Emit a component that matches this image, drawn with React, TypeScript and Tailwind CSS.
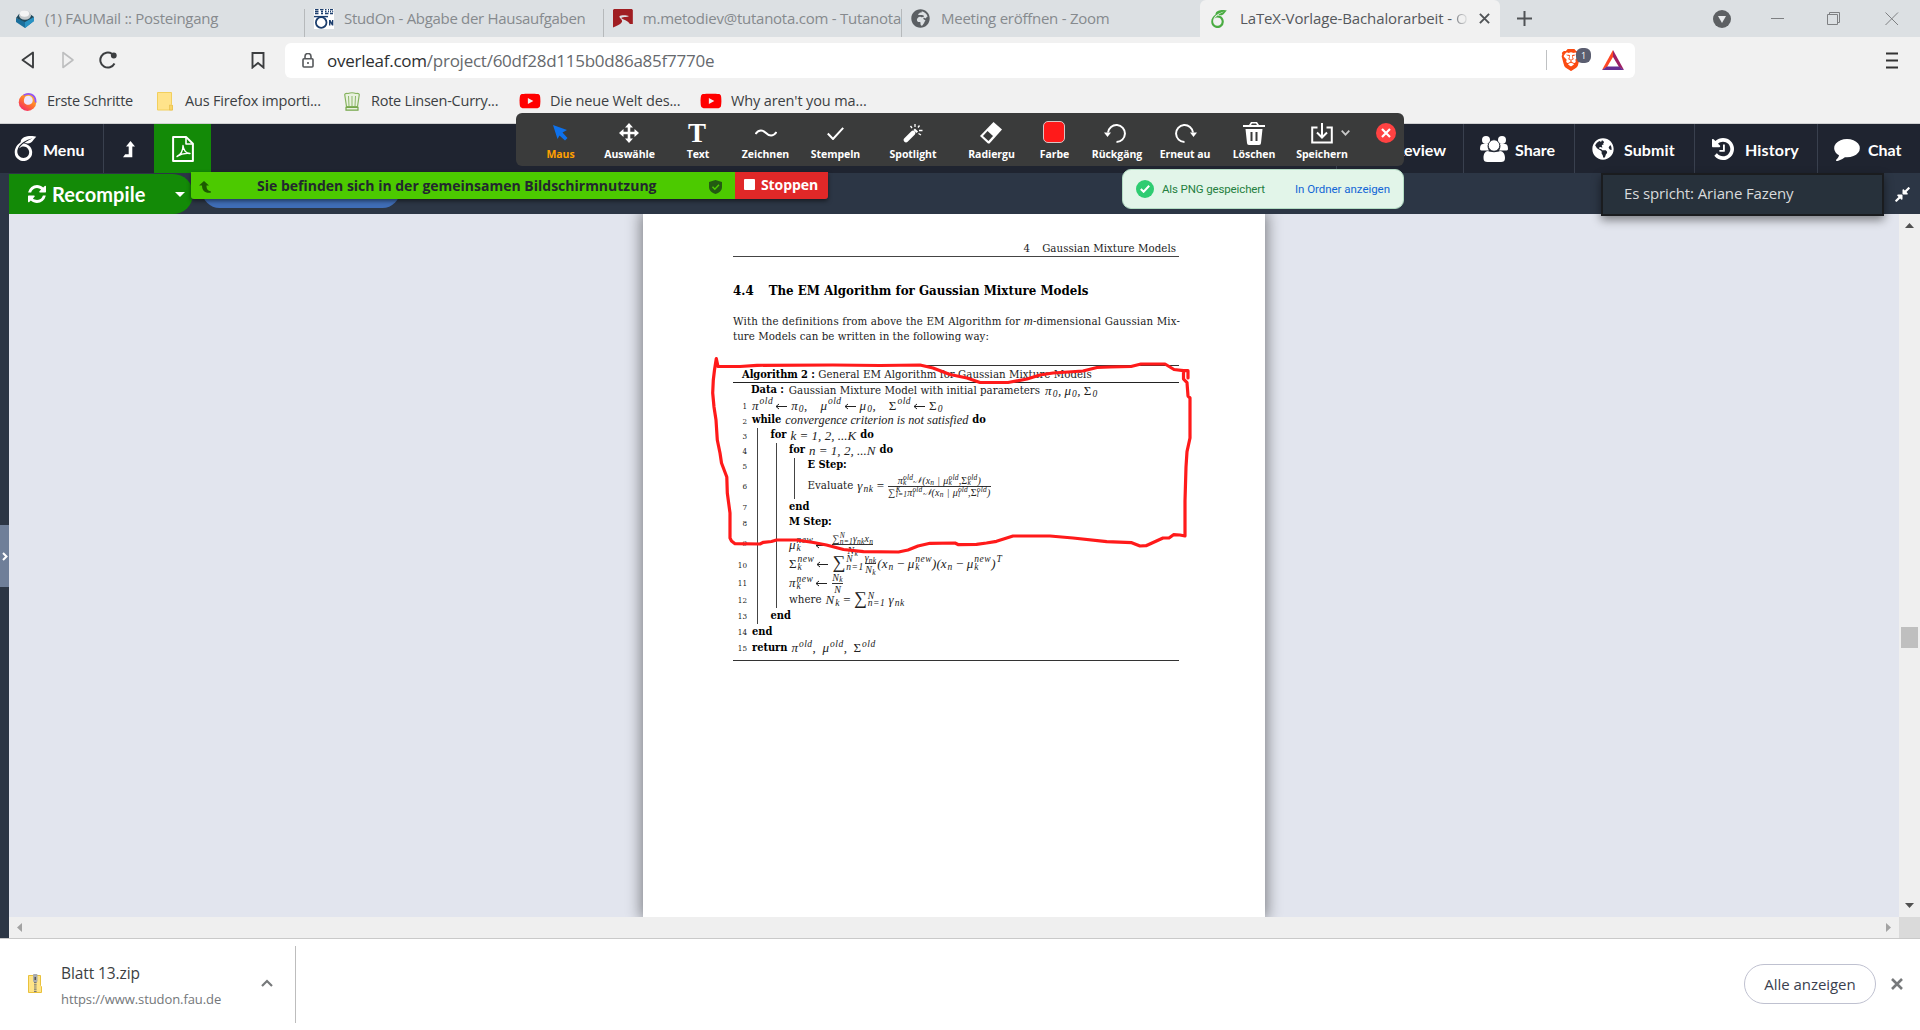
import React from "react";
import type { ReactNode } from "react";
import { SiOverleaf, SiBrave } from "react-icons/si";
import { FaYoutube, FaCompressAlt, FaGlobeAmericas, FaGlobeAfrica } from "react-icons/fa";

/* ---------- icons ---------- */

const Glyph = ({ d, className, box = "0 0 1792 1792" }: { d: string; className: string; box?: string }) => (
  <svg viewBox={box} className={className} fill="currentColor">
    <path d={d} />
  </svg>
);

const REFRESH =
  "M1511 1056q0 5-1 7-64 268-268 434.5t-478 166.5q-146 0-282.5-55t-243.5-157l-129 129q-19 19-45 19t-45-19-19-45v-448q0-26 19-45t45-19h448q26 0 45 19t19 45-19 45l-137 137q71 66 161 102t187 36q134 0 250-65t186-179q11-17 53-117 8-23 30-23h192q13 0 22.5 9.5t9.5 22.5zm25-800v448q0 26-19 45t-45 19h-448q-26 0-45-19t-19-45 19-45l138-138q-148-137-349-137-134 0-250 65t-186 179q-11 17-53 117-8 23-30 23h-199q-13 0-22.5-9.5t-9.5-22.5v-7q65-268 270-434.5t480-166.5q146 0 284 55.5t245 156.5l130-129q19-19 45-19t45 19 19 45z";
const HISTORY =
  "M1664 896q0 156-61 298t-164 245-245 164-298 61q-172 0-327-72.5t-264-204.5q-7-10-6.5-22.5t8.5-20.5l137-138q10-9 25-9 16 2 23 12 73 95 179 147t225 52q104 0 198.5-40.5t163.5-109.5 109.5-163.5 40.5-198.5-40.5-198.5-109.5-163.5-163.5-109.5-198.5-40.5q-98 0-188 35.5t-160 101.5l137 138q31 30 14 69-17 40-59 40h-448q-26 0-45-19t-19-45v-448q0-42 40-59 39-17 69 14l130 129q107-101 244.5-156.5t284.5-55.5q156 0 298 61t245 164 164 245 61 298zm-640-288v448q0 14-9 23t-23 9h-320q-14 0-23-9t-9-23v-64q0-14 9-23t23-9h224v-352q0-14 9-23t23-9h64q14 0 23 9t9 23z";
const COMMENT =
  "M1792 896q0 174-120 321.5t-326 233-450 85.5q-70 0-145-8-198 175-460 242-49 14-114 22-17 2-30.5-9t-17.5-29v-1q-3-4-.5-12t2-10 4.5-9.5l6-9 7-8.5 8-9q7-8 31-34.5t34.5-38 31-39.5 32.5-51 27-59 26-76q-157-89-247.5-220t-90.5-281q0-174 120-321.5t326-233 450-85.5 450 85.5 326 233 120 321.5z";

const MailIcon = () => (
  <svg viewBox="0 0 20 20" className="size-5">
    <path d="M1 9l9 3 9-4v4l-9 7-9-6z" fill="#1b6f9c" />
    <path d="M10 12l9-4v4l-9 7z" fill="#2a93c4" />
    <path d="M1 9l3-4h11l4 3-9 5z" fill="#20495c" />
    <ellipse cx="10" cy="6.200" rx="6" ry="4.600" fill="#c6cacc" />
    <ellipse cx="9.500" cy="4.600" rx="4.600" ry="3.200" fill="#f4f5f5" />
  </svg>
);

const StudonIcon = () => (
  <svg viewBox="0 0 20 20" className="size-5">
    <rect width="20" height="20" fill="#fff" />
    <path d="M1 .5h3.500M1 2.500h3.500M1 4.500h3.500M6 .5h3.500M7 2.500h2M7 4.500h2M11 .5h1.500M11 2.500h1.500M11 4.500h3.500M14 .5h1M14 2.500h1M16 .5h3M16 2.500h1M18.200 2.500h1M16 4.500h3" stroke="#1d3f6e" strokeWidth="1.500" />
    <circle cx="7.200" cy="13.500" r="5.300" fill="none" stroke="#1d3f6e" strokeWidth="1.800" />
    <path d="M0 7.600h14" stroke="#1d3f6e" strokeWidth="1.400" />
    <path d="M15 11h1.500l1.500 2.500V11h1.300v5.500H18L16.400 14v2.500H15z" fill="#1d3f6e" />
  </svg>
);

const TutanotaIcon = () => (
  <svg viewBox="0 0 20 19" className="h-[19px] w-5">
    <path d="M1 0h18l1 1v14h-3C15 11.500 10 10.500 8.500 9.200c-.5-1.200 6.500-1 7.500-2.200-3-1.200-8.500-1-9.500.3C6 9 10 10.500 9 13c-1.500 2.500-5 4-9 5.500V1z" fill="#a01e22" />
  </svg>
);

const FirefoxIcon = () => (
  <svg viewBox="0 0 20 20" className="size-[19px]">
    <defs>
      <linearGradient id="fx" x1="0.9" y1="0" x2="0.2" y2="1">
        <stop offset="0" stopColor="#ffcf2e" />
        <stop offset="0.5" stopColor="#ff7a2a" />
        <stop offset="1" stopColor="#f5246b" />
      </linearGradient>
    </defs>
    <circle cx="10" cy="10.700" r="9.200" fill="url(#fx)" />
    <path d="M6 3.500c5-3.500 13-1 12.500 7.500" fill="none" stroke="#9355f5" strokeWidth="1.800" />
    <path d="M7.500 5c4-2.500 8.500 0 8 4.500-.5 4-5 5-7.500 3C5.500 11.500 6 7.500 7.500 5z" fill="#eee6fb" />
  </svg>
);

const FolderIcon = () => (
  <svg viewBox="0 0 16 19" className="h-[19px] w-4">
    <path d="M.5.500h14v12l1.200 1V18H.5z" fill="#ffe38b" stroke="#f2cf5d" />
    <path d="M12.500 18v-5l3 .5V18z" fill="#f8d567" stroke="#e5bb46" strokeWidth=".6" />
  </svg>
);

const ChefIcon = () => (
  <svg viewBox="0 0 16 19" className="h-[19px] w-4">
    <path d="M2.500 14.500L.7 2.500Q1 1 4 1.500q4-1.500 8 0 3-.5 3.300 1L13.500 14.500z" fill="#e9f2df" stroke="#86b35e" strokeWidth="1.200" />
    <path d="M4.500 4l.5 10M8 4v10M11.500 4L11 14" stroke="#8db76a" />
    <path d="M2 15.300h12v2.900H2z" fill="#e9f2df" stroke="#76a64b" strokeWidth="1.200" />
  </svg>
);

const BatIcon = () => (
  <svg viewBox="0 0 22 20" className="h-5 w-[22px]">
    <path d="M11 0L0 20l5-3 6-10z" fill="#ff4724" />
    <path d="M11 0l11 20-5-3-6-10z" fill="#9e1f63" />
    <path d="M0 20l5-3.500h12L22 20z" fill="#662d91" />
  </svg>
);

const UsersIcon = () => (
  <svg viewBox="0 0 28 26" className="h-[26px] w-7" fill="currentColor">
    <circle cx="6" cy="4" r="4" />
    <circle cx="22" cy="4" r="4" />
    <path d="M0 13c0-3.500 1-5 3-5h5c-1 3 0 5 1 6.500H2.500C1 14.500 0 14 0 13zM28 13c0-3.500-1-5-3-5h-5c1 3 0 5-1 6.500h6.500c1.500 0 2.500-.5 2.500-1.500z" />
    <circle cx="14" cy="9.500" r="5.700" stroke="#1f2430" strokeWidth=".8" />
    <path d="M8 15c2 1.500 10 1.500 12 0 3 0 5 3 5 7 0 3-1.500 4-4 4H7.500C5 26 3.500 25 3.500 22c0-4 1.500-7 4.500-7z" />
  </svg>
);

const PdfIcon = () => (
  <svg viewBox="0 0 22 26" className="h-[26px] w-[22px]" fill="none" stroke="#fff" strokeLinejoin="round">
    <path d="M1.100 1.100h13.200l6.600 6.600v17.200H1.100z" strokeWidth="2" />
    <path d="M14 1v7h7" strokeWidth="1.600" />
    <path d="M5 20.500c4-2 6-6 6-11 .5 5 3 7.500 7 8-4-.5-8.500 0-13 3z" strokeWidth="1.400" />
  </svg>
);

const ZipIcon = () => (
  <svg viewBox="0 0 14 19" className="h-[19px] w-3.5">
    <path d="M.5 1.500h12v10l1 1.200v5.800H.5z" fill="#ffe488" stroke="#e9c13c" />
    <rect x="5" y="0" width="4.500" height="8" rx="1" fill="#a9abad" />
    <rect x="6.500" y="3" width="1.500" height="3" fill="#555" />
    <path d="M7.300 8v10.500" stroke="#777" strokeWidth="2.600" strokeDasharray="1.200 1" />
  </svg>
);

/* ---------- browser chrome ---------- */

const Tab = ({ icon, title, className }: { icon: ReactNode; title: string; className: string }) => (
  <div className={`flex h-[37px] shrink-0 items-center overflow-hidden whitespace-nowrap ${className}`}>
    {icon}
    <span>{title}</span>
  </div>
);

const TabSplit = () => <div className="mt-[9px] h-7 w-px shrink-0 bg-[#b6b9bb]" />;

const TabBar = () => (
  <div className="flex h-[37px] shrink-0 bg-[#dce0e3] text-[15px] tracking-[-0.31px] text-[#868a8e]">
    <Tab className="w-[304px] gap-2.5 pl-[15px] tracking-[-0.28px]" icon={<MailIcon />} title="(1) FAUMail :: Posteingang" />
    <TabSplit />
    <Tab className="w-[298px] gap-[10px] pl-[9px]" icon={<StudonIcon />} title="StudOn - Abgabe der Hausaufgaben" />
    <TabSplit />
    <Tab className="w-[297px] gap-[10px] pl-[9px] tracking-[-0.25px]" icon={<TutanotaIcon />} title="m.metodiev@tutanota.com - Tutanota" />
    <TabSplit />
    <Tab
      className="w-[298px] gap-[11px] pl-[9px] tracking-[-0.26px]"
      icon={<FaGlobeAfrica className="size-[19px] text-[#5b5f63]" />}
      title="Meeting eröffnen - Zoom"
    />
    <div className="flex h-[37px] w-[300px] shrink-0 items-center rounded-t-md bg-[#f1f1f1] text-[#55585c]">
      <SiOverleaf className="ml-2.5 size-[18px] text-[#4aac42]" />
      <span className="ml-3 tracking-[-0.12px]">LaTeX-Vorlage-Bachalorarbeit - </span>
      <span className="ml-1 w-[13px] overflow-hidden bg-gradient-to-r from-[#85888c] to-[#f1f1f1] bg-clip-text text-transparent">O</span>
      <svg viewBox="0 0 12 12" className="ml-[10px] size-[11px]" stroke="#505356" strokeWidth="2.100">
        <path d="M1 1l10 10M11 1L1 11" />
      </svg>
    </div>
    <svg viewBox="0 0 15 15" className="mt-[11px] ml-[17px] size-[15px]" stroke="#505356" strokeWidth="2">
      <path d="M7.500 0v15M0 7.500h15" />
    </svg>
    <div className="mt-2.5 ml-[181px] flex size-[18px] items-center justify-center rounded-full bg-[#5d6063]">
      <svg viewBox="0 0 8 7" className="w-2" fill="#e8eaec">
        <path d="M0 0h8L4 7z" />
      </svg>
    </div>
    <svg viewBox="0 0 128 14" className="mt-3 ml-10 h-3.5 w-32" fill="none" stroke="#7e8082">
      <path d="M0 6.500h13M56.500 2.500h10v10h-10zM58.500 2V.500h10v10H67M114.500.500l12.500 12.500M127 .500L114.500 13" />
    </svg>
  </div>
);

const AddressRow = () => (
  <div className="flex h-[46px] shrink-0 items-center">
    <svg viewBox="0 0 96 18" className="ml-[21px] h-[18px] w-24" fill="none" strokeLinejoin="round">
      <path d="M12 1.500v15L1.500 9z" stroke="#3c3e40" strokeWidth="1.900" />
      <path d="M42 1.500v15L52 9z" stroke="#bdbebf" strokeWidth="1.600" />
      <path d="M93.500 12.500A7.500 7.500 0 1 1 91 2.800" stroke="#3c3e40" strokeWidth="2" />
      <circle cx="92.800" cy="4.500" r="2.900" fill="#3c3e40" />
    </svg>
    <svg viewBox="0 0 14 17" className="ml-[134px] h-[17px] w-3.5" fill="none" stroke="#3c3e40" strokeWidth="1.900">
      <path d="M1.500 1h11v14.500L7 11l-5.500 4.500z" />
    </svg>
    <div className="ml-5 flex h-[35px] w-[1350px] items-center rounded-md bg-white">
      <svg viewBox="0 0 12 15" className="ml-[17px] h-[15px] w-3" fill="none" stroke="#55585b" strokeWidth="1.600">
        <rect x="1" y="5.800" width="10" height="8.200" rx="1" />
        <path d="M3 5.500V3.500a3 3 0 0 1 6 0v2M6 9v2" />
      </svg>
      <span className="ml-[13px] pt-0.5 text-[17px] tracking-[-0.25px] text-[#66696d]">
        <span className="text-[#2d2f31]">overleaf.com</span>/project/60df28d115b0d86a85f7770e
      </span>
      <div className="mr-[14px] ml-auto h-5 w-px bg-[#bfc1c3]" />
      <div className="relative flex h-6 w-[41px] items-center">
        <SiBrave className="-ml-px size-[22px] text-[#fb4b12]" />
        <span className="absolute top-0 left-[15px] flex size-[15px] items-center justify-center rounded-md bg-[#5b5e70] text-[9px] text-white">1</span>
      </div>
      <div className="mr-[11px]">
        <BatIcon />
      </div>
    </div>
    <svg viewBox="0 0 12 17" className="mr-[22px] ml-auto h-[17px] w-3" stroke="#333" strokeWidth="1.800">
      <path d="M0 1.500h12M0 8.500h12M0 15.500h12" />
    </svg>
  </div>
);

const Bookmark = ({ icon, title, className }: { icon: ReactNode; title: string; className: string }) => (
  <div className={`flex shrink-0 items-center whitespace-nowrap ${className}`}>
    {icon}
    <span>{title}</span>
  </div>
);

const YouTube = () => <FaYoutube className="-mx-px size-[22px] text-[#ff0000]" />;

const Bookmarks = () => (
  <div className="flex h-[41px] shrink-0 items-center border-b border-[#cfd0d1] pb-1 text-[14.5px] tracking-[-0.24px] text-[#3c3f43]">
    <Bookmark className="w-[157px] gap-2.5 pl-[18px] tracking-[-0.28px]" icon={<FirefoxIcon />} title="Erste Schritte" />
    <Bookmark className="w-[187px] gap-3 tracking-[-0.18px]" icon={<FolderIcon />} title="Aus Firefox importi..." />
    <Bookmark className="w-[176px] gap-[11px]" icon={<ChefIcon />} title="Rote Linsen-Curry..." />
    <Bookmark className="w-[181px] gap-2.5 tracking-[-0.15px]" icon={<YouTube />} title="Die neue Welt des..." />
    <Bookmark className="gap-2.5 tracking-[-0.12px]" icon={<YouTube />} title="Why aren't you ma..." />
  </div>
);

/* ---------- editor header ---------- */

const HeaderButton = ({ icon, label, className }: { icon?: ReactNode; label: string; className: string }) => (
  <div className={`flex h-full shrink-0 items-center border-l border-[#39404e] ${className}`}>
    {icon}
    <span className="pt-[3px]">{label}</span>
  </div>
);

const EditorHeader = () => (
  <div className="flex h-[49px] shrink-0 items-center bg-[#1f2430] font-['Lato'] text-[16px] font-bold text-white">
    <div className="flex h-full w-[103px] items-center pl-[13px]">
      <SiOverleaf className="size-[25px]" />
      <span className="pt-[3px] pl-[5px]">Menu</span>
    </div>
    <div className="flex h-full w-[51px] items-center justify-center border-l border-[#39404e] pt-px">
      <svg viewBox="0 0 12 17" className="h-[17px] w-3" fill="currentColor">
        <path d="M7.500 0L12 5.500H9.300V16.200H0L2.200 13.300H5.700V5.500H3z" />
      </svg>
    </div>
    <div className="flex h-full w-[57px] items-center justify-center bg-[#138a07]">
      <PdfIcon />
    </div>
    <div className="ml-auto flex h-full">
      <HeaderButton className="w-[127px] justify-end pr-[17px] pl-4" label="Review" />
      <HeaderButton className="w-[111px] gap-[7px] pl-4" icon={<UsersIcon />} label="Share" />
      <HeaderButton className="w-[120px] gap-2.5 pl-[17px] tracking-[0.1px]" icon={<FaGlobeAmericas className="size-[22px]" />} label="Submit" />
      <HeaderButton
        className="w-[123px] gap-[11px] pl-[17px] tracking-[0.15px]"
        icon={<Glyph d={HISTORY} box="128 128 1536 1536" className="size-[22px]" />}
        label="History"
      />
      <HeaderButton
        className="w-[103px] gap-2 pl-4"
        icon={<Glyph d={COMMENT} box="0 256 1792 1536" className="mt-0.5 h-[22px] w-[26px]" />}
        label="Chat"
      />
    </div>
  </div>
);

const PdfToolbar = () => (
  <div className="flex h-[41px] shrink-0 items-start bg-[#2c3645] pl-[9px]">
    <div className="mt-px flex h-10 w-[184px] items-center rounded-r-[20px] bg-[#138a07] font-['Lato'] text-white">
      <Glyph d={REFRESH} box="0 128 1536 1536" className="ml-[19px] size-[18px]" />
      <span className="pl-1.5 text-[20px] font-bold tracking-[0.1px]">Recompile</span>
      <svg viewBox="0 0 10 5" className="ml-[29px] h-[5px] w-2.5" fill="currentColor">
        <path d="M0 0h10L5 5z" />
      </svg>
    </div>
    <div className="ml-[9px] h-[35px] w-[198px] rounded-full bg-[#3f6db6]" />
    <FaCompressAlt className="mt-[13px] mr-[9px] ml-auto size-[17px] text-white" />
  </div>
);

/* ---------- document ---------- */

/* Variable with stacked superscript and subscript. */
const V = ({ children, sup, sub, small }: { children?: ReactNode; sup?: ReactNode; sub?: ReactNode; small?: boolean }) => (
  <span className="inline-flex items-center">
    <span>{children}</span>
    <span
      className={
        small
          ? "inline-flex flex-col text-[7.5px] leading-[5.500px] tracking-[0.2px]"
          : "inline-flex flex-col pl-px text-[9.5px] leading-[7.500px] tracking-[0.5px]"
      }
    >
      <span>{sup ?? "\u00a0"}</span>
      <span>{sub ?? "\u00a0"}</span>
    </span>
  </span>
);

const M = ({ children }: { children: ReactNode }) => (
  <span className="inline-flex items-center font-['Liberation_Serif','DejaVu_Serif',serif] text-[13px] whitespace-pre italic">{children}</span>
);

const Frac = ({ top, bottom }: { top: ReactNode; bottom: ReactNode }) => (
  <span className="mx-px inline-flex flex-col items-center text-[10px] leading-[11px] tracking-[0.2px] whitespace-pre">
    <span className="flex h-[11px] items-center">{top}</span>
    <span className="h-px w-full bg-[#333]" />
    <span className="flex h-[11px] items-center">{bottom}</span>
  </span>
);

const R = ({ children }: { children: ReactNode }) => <span className="not-italic">{children}</span>;
const B = ({ children }: { children: ReactNode }) => <b className="text-[11px] tracking-[-0.05px] text-black">{children}</b>;
const Arrow = () => (
  <svg viewBox="0 0 12 8" className="mr-[4px] ml-[2px] h-2 w-3" fill="none" stroke="#222">
    <path d="M1 4.500h11M4 2L1 4.500 4 7" />
  </svg>
);
const BigSum = () => <span className="text-[18px] leading-[14px] not-italic">∑</span>;

const Row = ({ n, depth, className, children }: { n: number; depth: number; className: string; children: ReactNode }) => (
  <div className={`flex ${className}`}>
    <span className="flex w-[14px] items-center justify-end pt-0.5 text-[8px]">{n}</span>
    <span className="w-[5px]" />
    {Array.from({ length: depth }, (_, i) => (
      <span key={i} className="ml-[5px] w-[13.500px] border-l border-[#444]" />
    ))}
    <span className="flex items-center gap-1 whitespace-pre">{children}</span>
  </div>
);

const Gauss = ({ i }: { i: string }) => (
  <>
    <V small sup="old" sub={i}>π</V>
    <span className="text-[9px] tracking-normal">𝒩</span>(<V small sub="n">x</V>
    <span className="px-[3px]">|</span>
    <V small sup="old" sub={i}>μ</V>,<V small sup="old" sub={i}><R>Σ</R></V>)
  </>
);

const Algorithm = () => (
  <div className="mt-[21px] h-[296px] w-[446px] border-y border-[#333] text-[11.4px] tracking-[0.03px] text-[#222]">
    <div className="h-[17px] border-b border-[#222] pl-[9px] leading-[16px] whitespace-pre">
      <B>Algorithm 2 :</B> General EM Algorithm for Gaussian Mixture Models
    </div>
    <div className="flex h-[15px] items-center pl-[18px] whitespace-pre">
      <B>Data :</B>
      <span className="pr-[5px] pl-[5px]">Gaussian Mixture Model with initial parameters</span>
      <M>
        <V sub="0">π</V>,<V sub="0"> μ</V>,<V sub="0"><R> Σ</R></V>
      </M>
    </div>
    <Row n={1} depth={0} className="h-[15px]">
      <M>
        <V sup="old">π</V><Arrow /><V sub="0">π</V><R>,    </R>
        <V sup="old">μ</V><Arrow /><V sub="0">μ</V><R>,    </R>
        <V sup="old"><R>Σ</R></V><Arrow /><V sub="0"><R>Σ</R></V>
      </M>
    </Row>
    <Row n={2} depth={0} className="h-[15px]">
      <B>while</B>
      <M><span className="text-[12.300px]">convergence criterion is not satisfied</span></M>
      <B>do</B>
    </Row>
    <Row n={3} depth={1} className="h-[15px]">
      <B>for</B><M>k = 1, 2, ...K</M><B>do</B>
    </Row>
    <Row n={4} depth={2} className="h-[15px]">
      <B>for</B><M>n = 1, 2, ...N</M><B>do</B>
    </Row>
    <Row n={5} depth={3} className="h-[15px]">
      <B>E Step:</B>
    </Row>
    <Row n={6} depth={3} className="h-[26px]">
      <span>Evaluate</span>
      <M>
        <V sub="nk">γ</V>
        <R> = </R>
        <Frac top={<Gauss i="k" />} bottom={<><V small sup="K" sub="l=1"><R>∑</R></V><Gauss i="l" /></>} />
      </M>
    </Row>
    <Row n={7} depth={2} className="h-[16px]"><B>end</B></Row>
    <Row n={8} depth={2} className="h-[15px]"><B>M Step:</B></Row>
    <Row n={9} depth={2} className="h-[26px]">
      <div className="pt-[3px]">
        <M>
          <V sup="new" sub="k">μ</V><Arrow />
          <Frac
            top={<><V small sup="N" sub="n=1"><R>∑</R></V><V small sub="nk">γ</V><V small sub="n">x</V></>}
            bottom={<V small sub="k">N</V>}
          />
        </M>
      </div>
    </Row>
    <Row n={10} depth={2} className="h-[18px]">
      <div className="pb-[3px]">
        <M>
          <V sup="new" sub="k"><R>Σ</R></V><Arrow /><V sup="N" sub="n=1"><BigSum /></V>
          <Frac top={<V small sub="nk">γ</V>} bottom={<V small sub="k">N</V>} />
          (<V sub="n">x</V><R> − </R><V sup="new" sub="k">μ</V>)(<V sub="n">x</V><R> − </R><V sup="new" sub="k">μ</V>)<V sup="T" />
        </M>
      </div>
    </Row>
    <Row n={11} depth={2} className="h-[18px]">
      <M>
        <V sup="new" sub="k">π</V><Arrow /><Frac top={<V small sub="k">N</V>} bottom="N" />
      </M>
    </Row>
    <Row n={12} depth={2} className="h-[16px]">
      <span>where</span>
      <M>
        <V sub="k">N</V><R> = </R><V sup="N" sub="n=1"><BigSum /></V><V sub="nk"> γ</V>
      </M>
    </Row>
    <Row n={13} depth={1} className="h-[16px]"><B>end</B></Row>
    <Row n={14} depth={0} className="h-[16px]"><B>end</B></Row>
    <Row n={15} depth={0} className="h-[16px]">
      <B>return</B>
      <M>
        <V sup="old">π</V><R>,  </R><V sup="old">μ</V><R>,  </R><V sup="old"><R>Σ</R></V>
      </M>
    </Row>
  </div>
);

const Page = () => (
  <div className="h-full w-[622px] bg-white px-[90px] font-['DejaVu_Serif_Condensed','DejaVu_Serif',serif] text-[11.4px] text-[#222] shadow-[0_0_14px_2px_rgba(0,0,0,0.45)]">
    <div className="flex h-[43px] w-[446px] items-end justify-end gap-3 border-b border-[#444] pr-[3px] leading-[15px] tracking-[0.04px]">
      <span>4</span>
      <span>Gaussian Mixture Models</span>
    </div>
    <div className="mt-[25px] flex gap-[15px] text-[13.2px] leading-[18px] font-bold text-black">
      <span>4.4</span>
      <span>The EM Algorithm for Gaussian Mixture Models</span>
    </div>
    <p className="mt-[14px] leading-[15px] tracking-[0.16px] whitespace-pre">
      With the definitions from above the EM Algorithm for <i className="font-['Liberation_Serif'] text-[12.5px] leading-[12px]">m</i>-dimensional Gaussian Mix-
      <br />
      <span className="tracking-[0.06px]">ture Models can be written in the following way:</span>
    </p>
    <Algorithm />
  </div>
);

const Viewer = () => (
  <div className="flex h-[724px] shrink-0">
    <div className="flex w-[9px] shrink-0 flex-col bg-[#2c3645]">
      <div className="mt-[311px] flex h-[62px] items-center justify-center bg-[#6f7f99]">
        <svg viewBox="0 0 6 9" className="h-[9px] w-1.5" fill="none" stroke="#fff" strokeWidth="2">
          <path d="M1 1l3.500 3.500L1 8" />
        </svg>
      </div>
    </div>
    <div className="flex flex-1 flex-col">
      <div className="flex h-[703px]">
        <div className="flex flex-1 justify-start overflow-hidden bg-[#e2e5ee] pl-[634px]">
          <Page />
        </div>
        <div className="flex w-[21px] flex-col items-center bg-[#efefef]">
          <svg viewBox="0 0 9 5" className="mt-[9px] h-[5px] w-[9px]" fill="#505050">
            <path d="M0 5h9L4.500 0z" />
          </svg>
          <div className="mt-[399px] h-[21px] w-[17px] bg-[#bfbfbf]" />
          <svg viewBox="0 0 9 5" className="mt-auto mb-[9px] h-[5px] w-[9px]" fill="#505050">
            <path d="M0 0h9L4.500 5z" />
          </svg>
        </div>
      </div>
      <div className="flex h-[21px] items-center bg-[#efefef] pl-2">
        <svg viewBox="0 0 5 9" className="h-[9px] w-[5px]" fill="#a3a3a3">
          <path d="M5 0v9L0 4.500z" />
        </svg>
        <svg viewBox="0 0 5 9" className="mr-2 ml-auto h-[9px] w-[5px]" fill="#a3a3a3">
          <path d="M0 0v9l5-4.500z" />
        </svg>
        <div className="h-full w-[21px] bg-[#dadada]" />
      </div>
    </div>
  </div>
);

const Downloads = () => (
  <div className="flex flex-1 border-t border-[#c9c9c9] bg-white">
    <div className="mt-[7px] flex h-[77px] w-[296px] border-r border-[#bdbdbd] pl-7">
      <div className="mt-7">
        <ZipIcon />
      </div>
      <div className="ml-[19px] pt-[15px]">
        <div className="h-6 text-[15.500px] leading-6 tracking-[-0.1px] text-[#3c3f43]">Blatt 13.zip</div>
        <div className="mt-1 text-[13px] leading-5 tracking-[-0.08px] text-[#74777a]">https://www.studon.fau.de</div>
      </div>
      <svg viewBox="0 0 12 8" className="mt-[33px] mr-[22px] ml-auto h-2 w-3" fill="none" stroke="#77797b" strokeWidth="2.200">
        <path d="M1 7l5-5 5 5" />
      </svg>
    </div>
    <div className="mt-[25px] mr-[15px] ml-auto flex h-10 w-[132px] items-center justify-center rounded-full border border-[#bfc1d0] text-[15px] tracking-[-0.05px] text-[#3b3f4f]">
      Alle anzeigen
    </div>
    <svg viewBox="0 0 12 12" className="mt-[39px] mr-[17px] size-3" stroke="#77797b" strokeWidth="2.600">
      <path d="M1 1l10 10M11 1L1 11" />
    </svg>
  </div>
);

/* ---------- screen-sharing overlays ---------- */

const Tool = ({ label, className, children }: { label: string; className: string; children: ReactNode }) => (
  <div className={`flex shrink-0 flex-col items-center ${className}`}>
    <div className="flex h-[22px] items-center justify-center">{children}</div>
    <span className="mt-0.5 leading-4 whitespace-nowrap">{label}</span>
  </div>
);

const line = { fill: "none", stroke: "currentColor", strokeWidth: 2 } as const;

const ShareToolbar = () => (
  <div className="absolute top-[113px] left-[516px] flex h-[53px] w-[888px] rounded-md bg-[#3a3b3b] pt-[9px] pl-2.5 text-[10.500px] font-bold tracking-[-0.05px] text-white">
    <Tool label="Maus" className="w-[69px] text-[#ffa000]">
      <svg viewBox="0 0 15 16" className="h-4 w-[15px]" fill="#0e71eb">
        <path d="M0 0l14 5-4.500 2.500 5 5.500-2.500 2.500-5.500-5L4.500 14z" />
      </svg>
    </Tool>
    <Tool label="Auswähle" className="w-[69px]">
      <svg viewBox="0 0 20 20" className="-ml-px size-5" fill="currentColor">
        <path d="M10 0l4 4.500h-2.700V8.700h4.200V6L20 10l-4.500 4v-2.700h-4.200v4.200H14L10 20l-4-4.500h2.700v-4.200H4.500V14L0 10l4.500-4v2.700h4.200V4.500H6z" />
      </svg>
    </Tool>
    <Tool label="Text" className="w-[68px]">
      <span className="pr-0.5 font-['Liberation_Serif'] text-[27px] leading-[20px]">T</span>
    </Tool>
    <Tool label="Zeichnen" className="w-[67px]">
      <svg viewBox="0 0 22 8" className="h-2 w-[22px]" {...line}>
        <path d="M.5 5C4 0 8 1 11 4s7 4 10.500-1" />
      </svg>
    </Tool>
    <Tool label="Stempeln" className="w-[73px]">
      <svg viewBox="0 0 17 13" className="h-[13px] w-[17px]" {...line}>
        <path d="M.8 6.500L6 12 16.200.800" />
      </svg>
    </Tool>
    <Tool label="Spotlight" className="w-[82px]">
      <svg viewBox="0 0 20 20" className="size-5" {...line}>
        <path d="M3 17L10 10" strokeWidth="4.600" strokeLinecap="round" />
        <path d="M12 8.500l1.500-1.500" strokeWidth="4.500" />
        <path d="M12 1v3M7.500 3l1.500 2M16.500 2.500l-1.500 2M16 7.500h3.500M15.500 10.500l2.500 1.500" strokeWidth="1.300" />
      </svg>
    </Tool>
    <Tool label="Radiergu" className="w-[75px]">
      <svg viewBox="0 0 22 22" className="-ml-px size-[22px]" fill="currentColor">
        <path d="M13.500 0L22 7.500 9.500 21.500H8L0 14z" />
        <path d="M7.500 9L13 14l-4.500 5L3 14z" fill="#3a3b3b" />
      </svg>
    </Tool>
    <Tool label="Farbe" className="w-[51px]">
      <div className="-mt-0.5 -ml-px size-[22px] rounded-[5px] border border-[#d9c4c4] bg-[#ff1a1a]" />
    </Tool>
    <Tool label="Rückgäng" className="w-[74px]">
      <svg viewBox="0 0 22 20" className="-ml-1 h-5 w-[22px]" {...line}>
        <path d="M4 9.500A8.500 8.500 0 1 1 12.500 19" />
        <path d="M0 9.500h7L3.500 14z" fill="currentColor" stroke="none" />
      </svg>
    </Tool>
    <Tool label="Erneut au" className="w-[62px]">
      <svg viewBox="0 0 22 20" className="ml-0.5 h-5 w-[22px]" {...line}>
        <path d="M18 9.500A8.500 8.500 0 1 0 9.500 19" />
        <path d="M15 9.500h7L18.500 14z" fill="currentColor" stroke="none" />
      </svg>
    </Tool>
    <Tool label="Löschen" className="w-[76px]">
      <svg viewBox="0 0 22 23" className="h-[23px] w-[22px]" fill="currentColor">
        <path d="M0 3h6l2-3h6l2 3h6v2H0zM8 3h6l-1-1.500H9zM2.500 7h17L18 21q0 2-2 2H6q-2 0-2-2zM7.500 10v9H9.500v-9zM12.500 10v9H14.500v-9z" fillRule="evenodd" />
      </svg>
    </Tool>
    <Tool label="Speichern" className="w-[60px]">
      <svg viewBox="0 0 22 21" className="h-[21px] w-[22px]" {...line}>
        <path d="M6.500 4.500H1.200v15h19.600v-15H15.500M11 0v14M6 9.500l5 5 5-5" />
      </svg>
    </Tool>
    <svg viewBox="0 0 9 6" className="mt-[8px] -ml-[11px] h-1.5 w-[9px]" fill="none" stroke="#c9c9c9" strokeWidth="1.700">
      <path d="M.7.700l3.800 4 3.800-4" />
    </svg>
    <div className="mt-px ml-[26px] flex size-5 items-center justify-center rounded-full bg-[#ff4242]">
      <svg viewBox="0 0 10 10" className="size-2.5" stroke="#fff" strokeWidth="2.200">
        <path d="M1 1l8 8M9 1L1 9" />
      </svg>
    </div>
  </div>
);

const ShareBanner = () => (
  <div className="absolute top-[172px] left-[191px] flex h-[27px] w-[637px] overflow-hidden rounded-b-[3px] text-[14px] font-bold shadow-[0_2px_4px_rgba(0,0,0,0.5)]">
    <div className="flex w-[544px] items-center bg-[#4cca00] text-[#22282e]">
      <svg viewBox="0 0 12 12" className="mt-0.5 ml-2 size-3" fill="#1c5a00">
        <path d="M5 0l5 4.500H7.500C7.500 8 8.500 9.500 12 10.500v1C7 12.500 3 10.500 3 4.500H0z" />
      </svg>
      <span className="ml-[46px] whitespace-nowrap">Sie befinden sich in der gemeinsamen Bildschirmnutzung</span>
      <svg viewBox="0 0 13 14" className="mt-0.5 ml-[52px] h-3.5 w-[13px]">
        <path d="M6.500 0L13 2v5c0 3.500-3 6-6.500 7C3 13 0 10.500 0 7V2z" fill="#235a12" />
        <path d="M3.500 6.800l2.300 2.400L10 4.800" fill="none" stroke="#4cca00" strokeWidth="1.500" />
      </svg>
    </div>
    <div className="flex flex-1 items-center bg-[#e02828] pb-0.5 text-white">
      <div className="ml-[9px] size-[11px] rounded-[1px] bg-white" />
      <span className="ml-1.5 tracking-[-0.09px]">Stoppen</span>
    </div>
  </div>
);

const SavedToast = () => (
  <div className="absolute top-[169px] left-[1122px] flex h-10 w-[282px] items-center rounded-[9px] border border-[#b3dcc3] bg-[#e2f5e9] font-['Roboto'] text-[11.500px] tracking-[-0.13px]">
    <div className="ml-[13px] flex size-[18px] items-center justify-center rounded-full bg-[#2ecc71]">
      <svg viewBox="0 0 10 8" className="h-2 w-2.5" fill="none" stroke="#fff" strokeWidth="2">
        <path d="M.8 4l2.800 2.800L9.200.800" />
      </svg>
    </div>
    <span className="ml-2 pt-0.5 text-[#25803f]">Als PNG gespeichert</span>
    <span className="mr-[13px] ml-auto pt-0.5 tracking-[-0.04px] text-[#1266d6]">In Ordner anzeigen</span>
  </div>
);

const SpeakerPanel = () => (
  <div className="absolute top-[173px] left-[1601px] flex h-[43px] w-[283px] items-center border-2 border-[#1a1c1f] bg-[#27313b] pb-0.5 pl-[21px] text-[15px] tracking-[-0.13px] text-[#d8dadc] shadow-[0_4px_9px_rgba(0,0,0,0.45)]">
    Es spricht: Ariane Fazeny
  </div>
);

/* Freehand red outline drawn around the upper half of the algorithm. */
const Annotation = () => (
  <svg
    viewBox="700 350 500 210"
    className="pointer-events-none absolute top-[350px] left-[700px] h-[210px] w-[500px]"
    fill="none"
    stroke="#ff1a1a"
    strokeWidth="3.200"
    strokeLinejoin="round"
    strokeLinecap="round"
  >
    <path d="M1188 378L1188 370.700 1183.500 370.700 1174 369.500 1165 364 1141 364 1131 366.500 1110 367 1097 367.500 1083 371 1053 373 1040 375 1027 379 1008 382.500 980 382.500 967 378 950 374.500 933 368 920 365 880 365.500 833 365 757 365.300 740 366.500 718 366.500 716.300 358.500 714.500 370 713.300 380 712.700 393 714 407 716 420 717.300 440 720 453 721.500 463 726.800 477 727.300 493 730 513 730 538 731.500 541 735 543.700 760 544 763.500 542.300 771.500 541.500 776.500 540 796.500 540 813.500 542.500 826.500 545 843.500 549.500 863.500 551.700 898.500 552 908 550 918 546 930 543.300 955 543 958.500 544.700 976.500 544.300 986.500 543 996.500 541.300 1013 536 1050 536 1073 538 1106.700 541.700 1131.700 542.700 1140 546 1146 545.700 1163 538 1169 538 1173.500 534.700 1180 535 1185 536 1185 500.700 1186 467 1187 451.700 1190 438 1190 398 1188 396 1187 382.700 1183.500 379 1183.500 370.700" />
  </svg>
);

export default function App() {
  return (
    <div className="relative flex h-[1030px] w-[1920px] flex-col overflow-hidden bg-[#f1f1f1] font-['Open_Sans','Noto_Sans',sans-serif]">
      <TabBar />
      <AddressRow />
      <Bookmarks />
      <EditorHeader />
      <PdfToolbar />
      <Viewer />
      <Downloads />
      <Annotation />
      <ShareToolbar />
      <ShareBanner />
      <SavedToast />
      <SpeakerPanel />
    </div>
  );
}
